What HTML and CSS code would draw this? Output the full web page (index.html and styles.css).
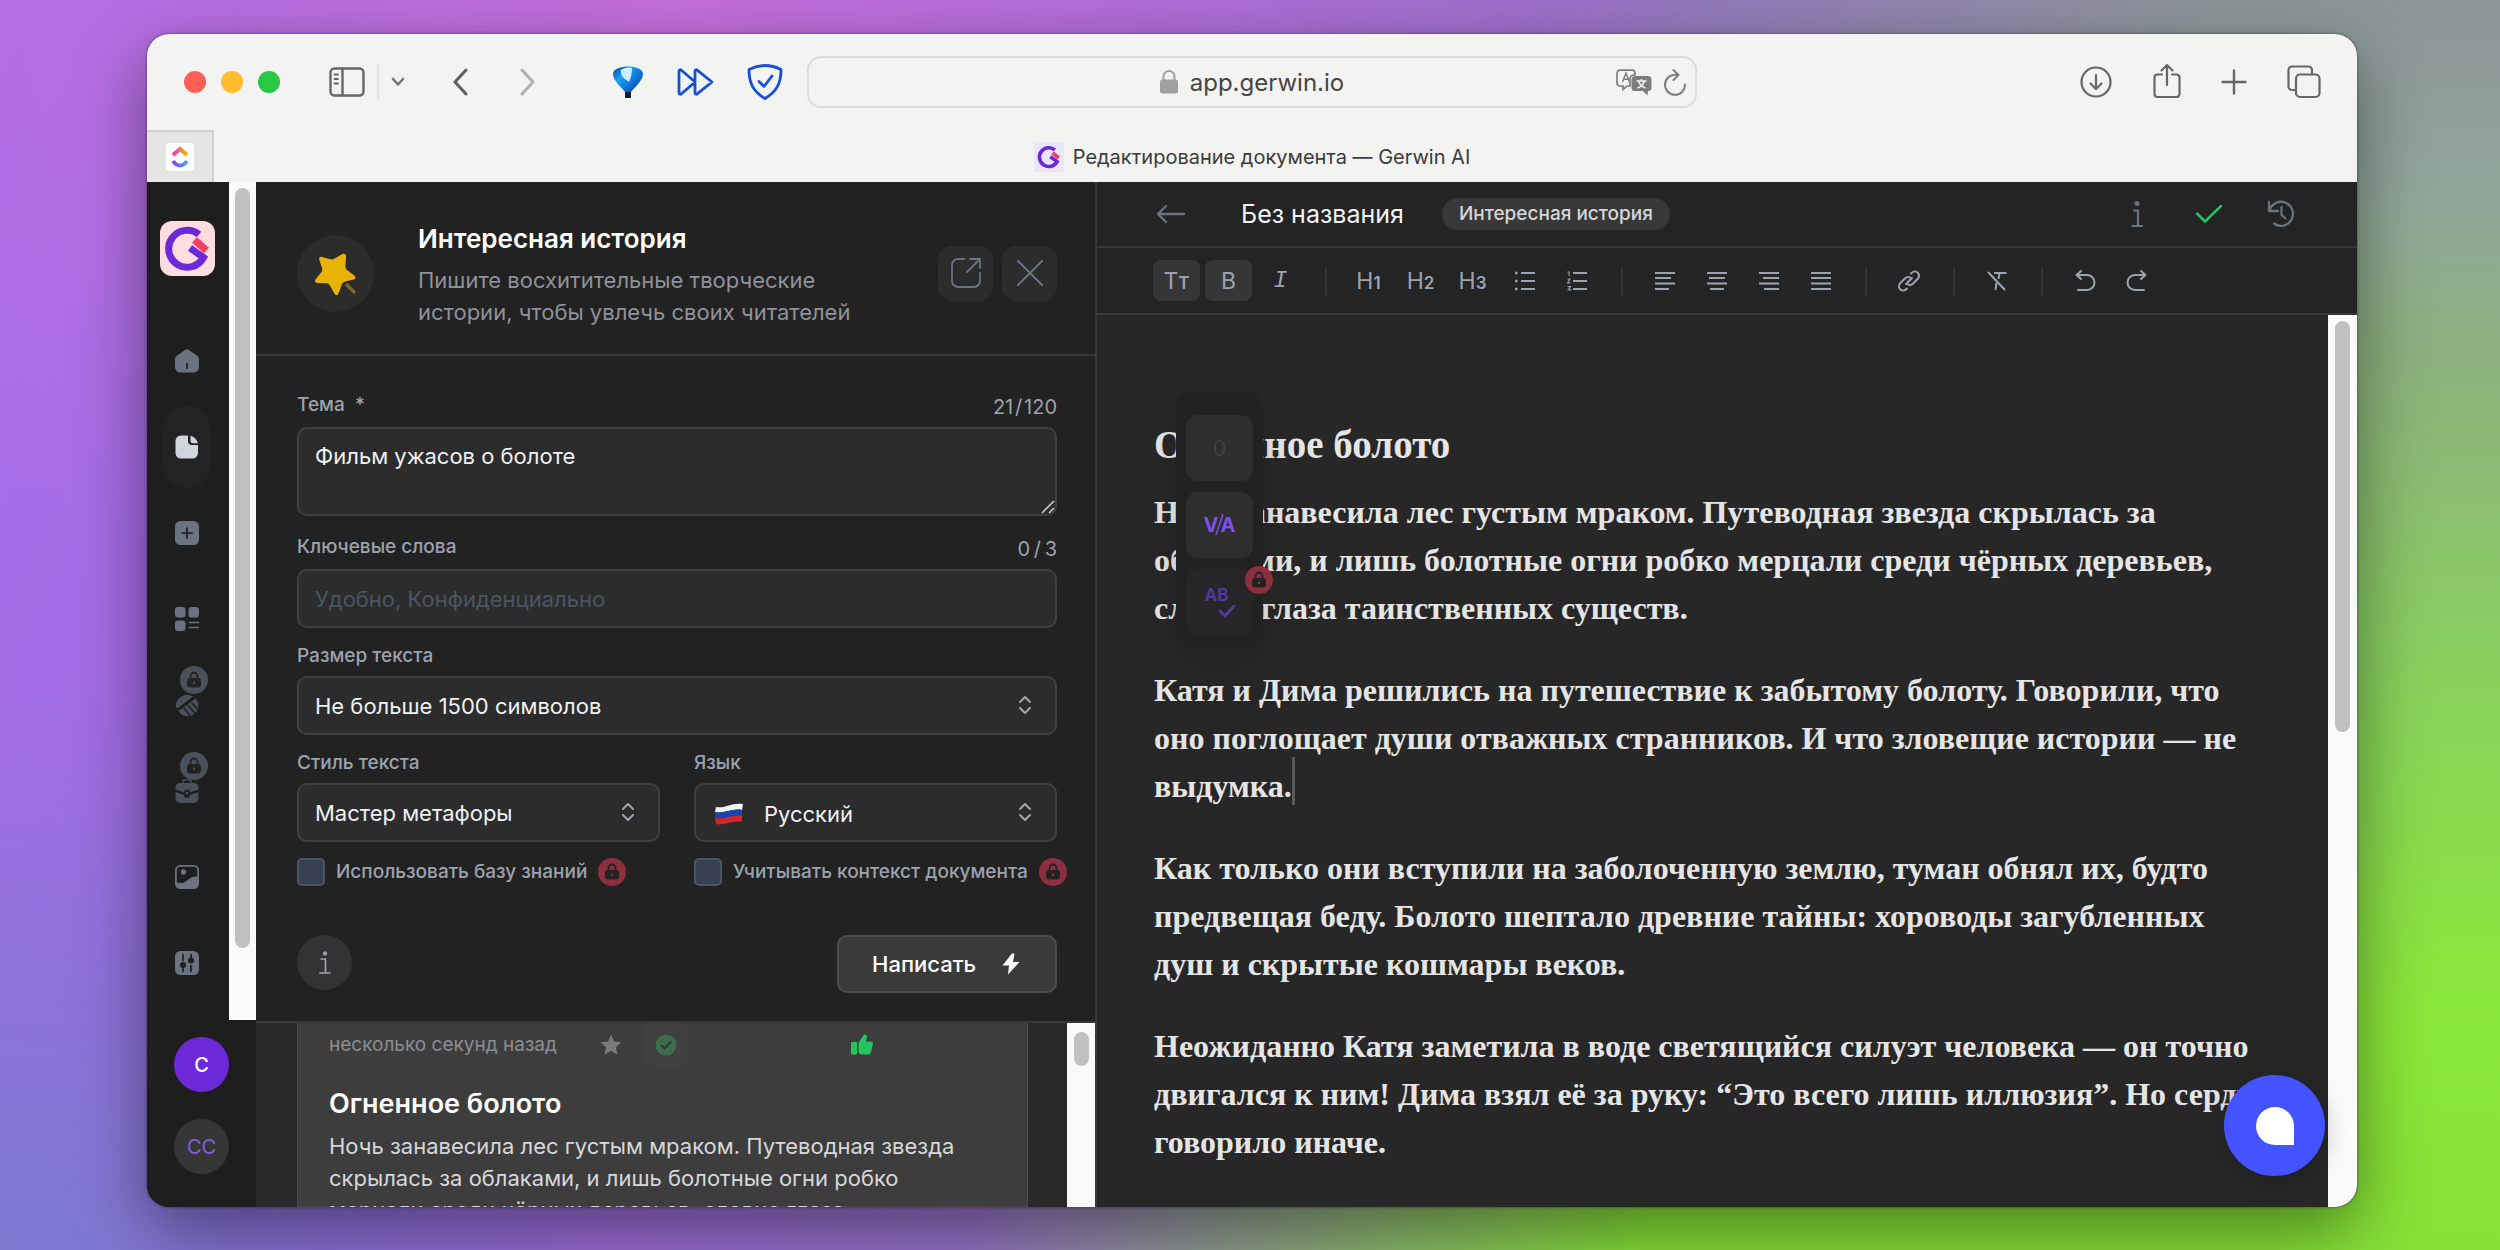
FILE: index.html
```html
<!DOCTYPE html>
<html lang="ru">
<head>
<meta charset="utf-8">
<meta name="viewport" content="width=device-width, initial-scale=1">
<title>Редактирование документа — Gerwin AI</title>
<link rel="stylesheet" href="styles.css">
</head>
<body>
<svg class="defs" aria-hidden="true">
  <defs>
    <linearGradient id="balloon" x1="0" x2="1" y1="0" y2="1"><stop offset="0" stop-color="#0a3d8f"/><stop offset=".3" stop-color="#1aa0f0"/><stop offset=".6" stop-color="#0b6fd0"/><stop offset="1" stop-color="#06204a"/></linearGradient>
    <linearGradient id="cu-top" x1="0" x2="1"><stop offset="0" stop-color="#f02fc2"/><stop offset="1" stop-color="#ffb400"/></linearGradient>
    <linearGradient id="cu-bottom" x1="0" x2="1"><stop offset="0" stop-color="#8a3cf5"/><stop offset="1" stop-color="#49a8ff"/></linearGradient>
    <symbol id="gerwin" viewBox="0 0 55 55">
      <path d="M39 13.500A18.500 18.500 0 1 0 43.500 36.500L30 27" fill="none" stroke="#6d28d9" stroke-width="7"/>
      <path d="M34.500 19l12 10.500" stroke="#f43f5e" stroke-width="7.500" fill="none"/>
    </symbol>
    <symbol id="lock" viewBox="0 0 28 28">
      <circle cx="14" cy="14" r="14" fill="currentColor"/>
      <path d="M10.500 12.500v-2.500a3.500 3.500 0 0 1 7 0v2.500" fill="none" stroke="#222" stroke-width="1.800"/>
      <rect x="7" y="12" width="14" height="9.500" rx="3" fill="#222"/>
      <circle cx="14" cy="16.800" r="1.300" fill="currentColor"/>
    </symbol>
    <symbol id="updown" viewBox="0 0 14 20"><path d="M2 7l5-5 5 5M2 13l5 5 5-5" fill="none" stroke="#a3a6ad" stroke-width="2" stroke-linecap="round" stroke-linejoin="round"/></symbol>
  </defs>
</svg>

<div class="window">
  <header class="chrome">
    <div class="chrome-left">
      <div class="lights"><i class="light red"></i><i class="light yellow"></i><i class="light green"></i></div>
      <button class="plain sidebar-toggle" aria-label="Боковая панель">
        <svg width="36" height="30" viewBox="0 0 36 30" fill="none" stroke="#666664" stroke-width="2.400" stroke-linecap="round"><rect x="1.500" y="1.500" width="33" height="27" rx="4"/><path d="M13.500 2v26"/><path d="M5.500 7.500h3.500M5.500 12h3.500M5.500 16.500h3.500" stroke-width="1.800"/></svg>
      </button>
      <button class="plain tab-menu" aria-label="Группы вкладок"><svg width="14" height="10" viewBox="0 0 14 10" fill="none" stroke="#747472" stroke-width="2.600" stroke-linecap="round" stroke-linejoin="round"><path d="M2 2l5 5.500L12 2"/></svg></button>
      <button class="plain nav-back" aria-label="Назад"><svg width="17" height="28" viewBox="0 0 17 28" fill="none" stroke="#5f5f5d" stroke-width="3" stroke-linecap="round" stroke-linejoin="round"><path d="M14 2L3 14l11 12"/></svg></button>
      <button class="plain nav-forward" aria-label="Вперёд"><svg width="17" height="28" viewBox="0 0 17 28" fill="none" stroke="#b0b0ae" stroke-width="3" stroke-linecap="round" stroke-linejoin="round"><path d="M3 2l11 12L3 26"/></svg></button>
      <div class="extensions">
        <button class="plain" aria-label="Воздушный шар"><svg width="32" height="33" viewBox="0 0 32 33"><path d="M1 8C1 3 8 .5 16 .5S31 3 31 8c0 6-8 13-12 18v6h-6v-6C9 21 1 14 1 8z" fill="url(#balloon)"/><path d="M9 4c4-3 9-3 11-2 0 5-1 10-3 14C12 13 8 9 9 4z" fill="#cfeeff"/><path d="M13 26h6v6h-6z" fill="#0a2038"/></svg></button>
        <button class="plain" aria-label="Ускорение"><svg width="37" height="28" viewBox="0 0 37 28" fill="none" stroke="#1550d6" stroke-width="2.800" stroke-linejoin="round"><path d="M2 3v22c0 1.500 1.500 1.500 2.500.7L18 14 4.500 2.300C3.500 1.500 2 1.500 2 3zM18 3v22c0 1.500 1.500 1.500 2.500.7L35 14 20.500 2.300C19.500 1.500 18 1.500 18 3z"/></svg></button>
        <button class="plain" aria-label="Защита"><svg width="36" height="36" viewBox="0 0 36 36" fill="none" stroke="#1550d6" stroke-width="2.800" stroke-linejoin="round" stroke-linecap="round"><path d="M18 1.500c5 0 11 1.500 16 4C34 19 30 27.500 18 34.500 6 27.500 2 19 2 5.500c5-2.500 11-4 16-4z"/><path d="M12 17.500l5 5 8-10.500"/></svg></button>
      </div>
    </div>
    <div class="url-bar">
      <div class="url-center">
        <svg width="18" height="24" viewBox="0 0 18 24"><rect x="0" y="9.500" width="18" height="14" rx="2.500" fill="#a0a09e"/><path d="M3.500 11V6.500a5.500 5.500 0 0 1 11 0V11" fill="none" stroke="#a0a09e" stroke-width="2"/></svg>
        <span>app.gerwin.io</span>
      </div>
      <div class="url-actions">
        <button class="plain" aria-label="Перевести"><svg width="36" height="27" viewBox="0 0 36 27"><path d="M4 1.200h12a3 3 0 0 1 3 3V6h-1a4 4 0 0 0-4 4v7h-3l-4 3.500V17H4a3 3 0 0 1-3-3V4.200a3 3 0 0 1 3-3z" fill="none" stroke="#7d7d7b" stroke-width="1.700"/><path d="M6.500 13L10 4l3.500 9M7.800 10.200h4.400" fill="none" stroke="#7d7d7b" stroke-width="1.500"/><path d="M19 7h13a3.500 3.500 0 0 1 3.500 3.500v8a3.500 3.500 0 0 1-3.500 3.500l-.5 4.500L27 22h-8a3.500 3.500 0 0 1-3.500-3.500v-8A3.500 3.500 0 0 1 19 7z" fill="#7d7d7b"/><path d="M20.500 12h10M25.500 10v2M28.500 12c-1 3-4 6-7 7M22.500 12c1 3 4 6 7 7" fill="none" stroke="#f3f3f1" stroke-width="1.500"/></svg></button>
        <button class="plain" aria-label="Обновить"><svg width="22" height="28" viewBox="0 0 22 28" fill="none" stroke="#7d7d7b" stroke-width="2" stroke-linecap="round" stroke-linejoin="round"><path d="M13 7A10 10 0 1 0 21 16.500M9.500 2l5 5-5 5"/></svg></button>
      </div>
    </div>
    <div class="chrome-right">
      <button class="plain" aria-label="Загрузки"><svg width="34" height="34" viewBox="0 0 34 34" fill="none" stroke="#666664" stroke-width="2.200" stroke-linecap="round" stroke-linejoin="round"><circle cx="17" cy="17" r="14.500"/><path d="M17 10v14M11.500 18.500L17 24l5.500-5.500"/></svg></button>
      <button class="plain" aria-label="Поделиться"><svg width="28" height="38" viewBox="0 0 28 38" fill="none" stroke="#666664" stroke-width="2.200" stroke-linecap="round" stroke-linejoin="round"><path d="M9 11.500H4.500a3 3 0 0 0-3 3V31a3 3 0 0 0 3 3h19a3 3 0 0 0 3-3V14.500a3 3 0 0 0-3-3H19M14 22V2M8.500 7.500L14 2l5.500 5.500"/></svg></button>
      <button class="plain" aria-label="Новая вкладка"><svg width="26" height="26" viewBox="0 0 26 26" fill="none" stroke="#666664" stroke-width="2.400" stroke-linecap="round"><path d="M13 1.500v23M1.500 13h23"/></svg></button>
      <button class="plain" aria-label="Все вкладки"><svg width="34" height="34" viewBox="0 0 34 34" fill="none" stroke="#666664" stroke-width="2.200" stroke-linejoin="round"><rect x="9" y="9.500" width="23.500" height="22.500" rx="4"/><path d="M9 25H5a3.500 3.500 0 0 1-3.500-3.500V5A3.500 3.500 0 0 1 5 1.500h16.500A3.500 3.500 0 0 1 25 5v4.500"/></svg></button>
    </div>
  </header>

  <nav class="tabs">
    <button class="pinned-tab" aria-label="ClickUp"><svg width="28" height="28" viewBox="0 0 28 28"><rect width="28" height="28" rx="4" fill="#fff"/><path d="M7 12l7-6 7 6" fill="none" stroke="url(#cu-top)" stroke-width="4"/><path d="M7 18c4 6 10 6 14 0" fill="none" stroke="url(#cu-bottom)" stroke-width="4"/></svg></button>
    <div class="active-tab">
      <svg width="30" height="30" viewBox="0 0 30 30"><rect width="30" height="30" fill="#ece6fa"/><use href="#gerwin" x="1" y="1" width="28" height="28"/></svg>
      <span>Редактирование документа — Gerwin AI</span>
    </div>
  </nav>

  <div class="app">
    <aside class="rail">
      <div class="rail-scroll">
        <div class="rail-items">
          <a class="logo" href="#" aria-label="Gerwin"><svg width="55" height="55"><use href="#gerwin"/></svg></a>
          <a class="rail-link" href="#" aria-label="Главная"><svg width="24" height="24" viewBox="0 0 24 24"><path d="M10.500.8a2.600 2.600 0 0 1 3 0l8 5.400A4.500 4.500 0 0 1 24 10v8a5.500 5.500 0 0 1-5.500 5.500h-13A5.500 5.500 0 0 1 0 18v-8a4.500 4.500 0 0 1 2.500-3.800z" fill="#6b7280"/><path d="M12 15v4" stroke="#1e1e1e" stroke-width="1.800" stroke-linecap="round"/></svg></a>
          <a class="rail-link active" href="#" aria-label="Документы"><svg width="24" height="24" viewBox="0 0 24 24"><path d="M6 .5h7v5.500a4 4 0 0 0 4 4h6V18a5.500 5.500 0 0 1-5.500 5.500H6A5.500 5.500 0 0 1 .5 18V6A5.500 5.500 0 0 1 6 .5z" fill="#d1d5db"/><path d="M15.500.8c3.500 1 6.500 4 7.500 7.500h-5a2.500 2.500 0 0 1-2.500-2.500z" fill="#d1d5db"/></svg></a>
          <a class="rail-link" href="#" aria-label="Создать"><svg width="24" height="24" viewBox="0 0 24 24"><rect width="24" height="24" rx="5.500" fill="#6b7280"/><path d="M12 7v10M7 12h10" stroke="#1e1e1e" stroke-width="1.700" stroke-linecap="round"/></svg></a>
          <a class="rail-link" href="#" aria-label="Шаблоны"><svg width="24" height="24" viewBox="0 0 24 24" fill="#6b7280"><rect width="10.500" height="10.500" rx="3"/><rect x="13.500" width="10.500" height="10.500" rx="3"/><rect y="13.500" width="10.500" height="10.500" rx="3"/><path d="M14.500 15.500h9M14.500 20.500h9" stroke="#6b7280" stroke-width="1.600" stroke-linecap="round"/></svg></a>
          <a class="rail-link" href="#" aria-label="Партнёры"><svg width="24" height="24" viewBox="0 0 24 24"><path d="M.8 14.500A11.500 11.500 0 0 1 18 3.500L3.500 14.500a2 2 0 0 1-2.700 0zM20.500 5.500c3.500 4 3.800 9 1 13-3.500 5-10 6-15 3l-4-4.500c2 .3 3-.4 4.500-1.500z" fill="#4b505b"/><path d="M9 15l6 7.500M13 12l7 8.500M16.500 9.500l6 7" stroke="#1e1e1e" stroke-width="1.500"/></svg><svg class="rail-lock" width="28" height="28"><use href="#lock"/></svg></a>
          <a class="rail-link" href="#" aria-label="Портфель"><svg width="24" height="24" viewBox="0 0 24 24"><path d="M8 3.500V2.500A1.500 1.500 0 0 1 9.500 1h5A1.500 1.500 0 0 1 16 2.500v1" fill="none" stroke="#4b505b" stroke-width="1.700"/><path d="M5 4h14a4.500 4.500 0 0 1 4.500 4.500v2L15 13.500a3 3 0 0 0-6 0L.5 10.500v-2A4.500 4.500 0 0 1 5 4zM.5 13l8.500 3a3 3 0 0 0 6 0l8.500-3v6a5 5 0 0 1-5 5h-13a5 5 0 0 1-5-5z" fill="#4b505b"/><circle cx="12" cy="14" r="1.500" fill="#4b505b"/></svg><svg class="rail-lock" width="28" height="28"><use href="#lock"/></svg></a>
          <a class="rail-link" href="#" aria-label="Изображения"><svg width="24" height="24" viewBox="0 0 24 24"><rect x=".9" y=".9" width="22.200" height="22.200" rx="4.500" fill="none" stroke="#6b7280" stroke-width="1.800"/><circle cx="8.500" cy="7" r="2.700" fill="#6b7280"/><path d="M1 18c4-1 6 1 9-1s8-7 13-5v7a4 4 0 0 1-4 4H5a4 4 0 0 1-4-4z" fill="#6b7280"/></svg></a>
          <a class="rail-link" href="#" aria-label="Настройки"><svg width="24" height="24" viewBox="0 0 24 24"><rect width="24" height="24" rx="5.500" fill="#6b7280"/><path d="M8 3.500v6M8 16v4.500M16 3.500V8M16 14.500v6" stroke="#1e1e1e" stroke-width="1.700" stroke-linecap="round"/><circle cx="8" cy="14" r="3" fill="#1e1e1e"/><circle cx="16" cy="9.500" r="3" fill="#1e1e1e"/></svg></a>
        </div>
        <div class="scrollbar"><i class="thumb thumb-rail"></i></div>
      </div>
      <div class="rail-users">
        <button class="avatar avatar-main">C</button>
        <button class="avatar">CC</button>
      </div>
    </aside>

    <section class="panel">
      <header class="tool-head">
        <div class="tool-icon"><svg width="44" height="44" viewBox="0 0 44 44"><path d="M33 34l7 7" stroke="#7d6532" stroke-width="3.500" stroke-linecap="round"/><path d="M28.500 3c1.800-.8 3.600.2 3.500 2.300l-.6 9.700a5 5 0 0 0 1.600 4l7.300 5.500c1.800 1.300 1.300 3.500-.8 4l-8.500 2a5 5 0 0 0-3.200 3l-3.300 9c-.8 2.100-3 2.200-4 .3l-4.600-8.300a4 4 0 0 0-3.400-2.200L3.500 32c-2.300 0-3.200-2-1.800-3.700l5.600-7a5 5 0 0 0 .8-4L5.300 9C4.700 6.800 6 5.300 8.200 5.900l8.300 2.300a5 5 0 0 0 4-.7z" fill="#eab308"/></svg></div>
        <div class="tool-text">
          <h1>Интересная история</h1>
          <p>Пишите восхитительные творческие истории, чтобы увлечь своих читателей</p>
        </div>
        <div class="tool-actions">
          <button aria-label="Открыть"><svg width="30" height="30" viewBox="0 0 30 30" fill="none" stroke="#6b7280" stroke-width="1.800" stroke-linecap="round" stroke-linejoin="round"><path d="M13 1H7a6 6 0 0 0-6 6v16a6 6 0 0 0 6 6h16a6 6 0 0 0 6-6v-8M19 1h10v9M29 1L16 14"/></svg></button>
          <button aria-label="Закрыть"><svg width="26" height="26" viewBox="0 0 26 26" stroke="#6b7280" stroke-width="2" stroke-linecap="round"><path d="M1 1l24 24M25 1L1 25"/></svg></button>
        </div>
      </header>

      <form class="form">
        <div class="field field-area">
          <div class="label-row"><label for="topic">Тема&nbsp; *</label><span class="counter">21&#8202;/&#8202;120</span></div>
          <div class="control"><textarea id="topic">Фильм ужасов о болоте</textarea>
          <svg class="grip" width="14" height="14" viewBox="0 0 14 14" stroke="#d0d0d0" stroke-width="1.500"><path d="M1 13L13 1M8 13l5-5"/></svg></div>
        </div>
        <div class="field">
          <div class="label-row"><label for="keys">Ключевые слова</label><span class="counter">0&#8201;/&#8201;3</span></div>
          <input id="keys" type="text" placeholder="Удобно, Конфиденциально">
        </div>
        <div class="field">
          <label for="size">Размер текста</label>
          <div class="control"><select id="size"><option>Не больше 1500 символов</option></select><svg class="arrows" width="14" height="20"><use href="#updown"/></svg></div>
        </div>
        <div class="pair">
          <div class="field">
            <label for="style">Стиль текста</label>
            <div class="control"><select id="style"><option>Мастер метафоры</option></select><svg class="arrows" width="14" height="20"><use href="#updown"/></svg></div>
          </div>
          <div class="field">
            <label for="lang">Язык</label>
            <div class="control"><svg class="flag" width="30" height="22" viewBox="0 0 30 22"><path d="M2 4C10 6 18-1 29 1l-1 6C18 5 10 11 1 9z" fill="#f2f2f2"/><path d="M1 9c9 2 17-4 27-2v6c-10-2-18 4-27 2z" fill="#1544b5"/><path d="M1 15c9 2 17-4 27-2v6c-10-2-18 4-26 2z" fill="#d5242b"/></svg><select id="lang" class="with-flag"><option>Русский</option></select><svg class="arrows" width="14" height="20"><use href="#updown"/></svg></div>
          </div>
        </div>
        <div class="pair">
          <div class="check"><input type="checkbox" id="kb"><label for="kb">Использовать базу знаний</label><svg class="lock" width="28" height="28"><use href="#lock"/></svg></div>
          <div class="check"><input type="checkbox" id="ctx"><label for="ctx">Учитывать контекст документа</label><svg class="lock" width="28" height="28"><use href="#lock"/></svg></div>
        </div>
        <div class="form-foot">
          <button type="button" class="info" aria-label="Справка"><svg width="14" height="24" viewBox="0 0 14 24" fill="none" stroke="#9ca3af" stroke-width="1.700" stroke-linecap="round" stroke-linejoin="round"><circle cx="7" cy="2.500" r="1.300" fill="#9ca3af"/><path d="M3 8h4.500v14M2 22h10"/></svg></button>
          <button type="button" class="submit">Написать<svg width="18" height="22" viewBox="0 0 18 22"><path d="M10 .5L.5 12.500H7L6 21.500 17.500 9H11l1.500-8.500z" fill="#fff"/></svg></button>
        </div>
      </form>

      <div class="results">
        <article class="card">
          <div class="card-meta">
            <time>несколько секунд назад</time>
            <button class="plain star" aria-label="В избранное"><svg width="22" height="22" viewBox="0 0 22 22"><path d="M11 .5l3 7 7.500.7-5.700 5 1.700 7.500L11 16.800l-6.500 3.900 1.700-7.500-5.700-5L8 7.500z" fill="#7b7b7d"/></svg></button>
            <button class="done" aria-label="Использовано"><svg width="22" height="22" viewBox="0 0 22 22"><circle cx="11" cy="11" r="10.500" fill="#3f6a4f"/><path d="M6.500 11.500l3 3 6-6.500" fill="none" stroke="#2e3a32" stroke-width="2" stroke-linecap="round"/></svg></button>
            <button class="plain like" aria-label="Нравится"><svg width="22" height="21" viewBox="0 0 22 21" fill="#22c55e"><rect y="8" width="6" height="12.500" rx="1"/><path d="M7.500 9L12.500 1c2-1.200 4 .3 3.500 2.500L15 7.500h4.500c1.800 0 2.700 1.300 2.300 3l-1.800 7.500c-.4 1.700-1.500 2.500-3 2.500h-6c-1.500 0-3.500-1-3.500-2.500z"/></svg></button>
          </div>
          <h2>Огненное болото</h2>
          <p>Ночь занавесила лес густым мраком. Путеводная звезда скрылась за облаками, и лишь болотные огни робко мерцали среди чёрных деревьев, словно глаза таинственных существ.</p>
        </article>
        <div class="scrollbar"><i class="thumb thumb-results"></i></div>
      </div>
    </section>

    <main class="editor">
      <header class="doc-head">
        <button class="plain" aria-label="Назад к списку"><svg width="30" height="20" viewBox="0 0 30 20" fill="none" stroke="#6b7280" stroke-width="2.300" stroke-linecap="round" stroke-linejoin="round"><path d="M28 10H2M10 2l-8 8 8 8"/></svg></button>
        <span class="doc-title">Без названия</span>
        <span class="pill">Интересная история</span>
        <div class="doc-actions">
          <button class="plain" aria-label="Информация"><svg width="28" height="28" viewBox="0 0 28 28" fill="none" stroke="#6b7280" stroke-width="2.200" stroke-linecap="round" stroke-linejoin="round"><circle cx="14" cy="3.500" r="2.500" fill="#6b7280" stroke="none"/><path d="M11 10.500h4V26M9.500 26h9.500"/></svg></button>
          <button class="plain" aria-label="Сохранено"><svg width="28" height="22" viewBox="0 0 28 22" fill="none" stroke="#22c55e" stroke-width="2.500" stroke-linecap="round" stroke-linejoin="round"><path d="M2 10.500l8 8L26 3"/></svg></button>
          <button class="plain" aria-label="История"><svg width="28" height="28" viewBox="0 0 28 28" fill="none" stroke="#6b7280" stroke-width="2.300" stroke-linecap="round" stroke-linejoin="round"><path d="M2 2v9h9M2.500 10.500A12 12 0 1 1 7 23.500M14.500 7v8l4 3.500"/></svg></button>
        </div>
      </header>

      <div class="toolbar" role="toolbar" aria-label="Форматирование">
        <button class="on" aria-label="Текст"><b class="big">T</b><b class="small">T</b></button>
        <button class="on" aria-label="Жирный"><b class="big">B</b></button>
        <button aria-label="Курсив"><b class="big ital">I</b></button>
        <i class="sep"></i>
        <button aria-label="Заголовок 1"><b class="big">H</b><b class="small">1</b></button>
        <button aria-label="Заголовок 2"><b class="big">H</b><b class="small">2</b></button>
        <button aria-label="Заголовок 3"><b class="big">H</b><b class="small">3</b></button>
        <button aria-label="Список"><svg width="20" height="20" viewBox="0 0 20 20" stroke="#9ca3af" stroke-width="2"><path d="M6 2h14M6 10h14M6 18h14"/><path d="M0 2h2.500M0 10h2.500M0 18h2.500" stroke-width="2.500"/></svg></button>
        <button aria-label="Нумерованный список"><svg width="20" height="20" viewBox="0 0 20 20" stroke="#9ca3af" stroke-width="2" fill="none"><path d="M6 2h14M6 10h14M6 18h14"/><path d="M.5 1H2v4M.5 8h2.500l-2.500 4H3.500M.5 15.500h3L2 17.500l1.500 1.500H.5" stroke-width="1.100"/></svg></button>
        <i class="sep"></i>
        <button aria-label="По левому краю"><svg width="20" height="20" viewBox="0 0 20 20" stroke="#9ca3af" stroke-width="2"><path d="M0 2h20M0 7h16M0 12.500h20M0 18h14"/></svg></button>
        <button aria-label="По центру"><svg width="20" height="20" viewBox="0 0 20 20" stroke="#9ca3af" stroke-width="2"><path d="M0 2h20M2 7h16M0 12.500h20M3 18h14"/></svg></button>
        <button aria-label="По правому краю"><svg width="20" height="20" viewBox="0 0 20 20" stroke="#9ca3af" stroke-width="2"><path d="M0 2h20M4 7h16M0 12.500h20M5 18h15"/></svg></button>
        <button aria-label="По ширине"><svg width="20" height="20" viewBox="0 0 20 20" stroke="#9ca3af" stroke-width="2"><path d="M0 2h20M0 7h20M0 12.500h20M0 18h20"/></svg></button>
        <i class="sep"></i>
        <button aria-label="Ссылка"><svg width="24" height="24" viewBox="0 0 24 24" fill="none" stroke="#9ca3af" stroke-width="2" stroke-linecap="round"><path d="M9 18.500l-.8.8a4.200 4.200 0 0 1-6-6l5-5a4.200 4.200 0 0 1 5-.7" transform="translate(1 1)"/><path d="M15 5.500l.8-.8a4.200 4.200 0 0 1 6 6l-5 5a4.200 4.200 0 0 1-5 .7" transform="translate(-1 -1)"/><path d="M9 15l6-6"/></svg></button>
        <i class="sep"></i>
        <button aria-label="Очистить формат"><svg width="20" height="20" viewBox="0 0 20 20" fill="none" stroke="#9ca3af" stroke-width="2"><path d="M7 2h12.500M1 1l17 18M12.500 2l-1 6M9.500 12l-1 7"/></svg></button>
        <i class="sep"></i>
        <button aria-label="Отменить"><svg width="22" height="22" viewBox="0 0 22 22" fill="none" stroke="#9ca3af" stroke-width="2" stroke-linecap="round" stroke-linejoin="round"><path d="M7 1L2.500 5 7 9M3 5h10a7.500 7.500 0 0 1 0 15H4"/></svg></button>
        <button aria-label="Повторить"><svg width="22" height="22" viewBox="0 0 22 22" fill="none" stroke="#9ca3af" stroke-width="2" stroke-linecap="round" stroke-linejoin="round"><path d="M15 1l4.500 4L15 9M19 5H9a7.500 7.500 0 0 0 0 15h9"/></svg></button>
      </div>

      <div class="doc">
        <article class="doc-text">
          <h2>Огненное болото</h2>
          <p>Ночь занавесила лес густым мраком. Путеводная звезда скрылась за<br>облаками, и лишь болотные огни робко мерцали среди чёрных деревьев,<br>словно глаза таинственных существ.</p>
          <p>Катя и Дима решились на путешествие к забытому болоту. Говорили, что<br>оно поглощает души отважных странников. И что зловещие истории — не<br>выдумка.<i class="caret"></i></p>
          <p>Как только они вступили на заболоченную землю, туман обнял их, будто<br>предвещая беду. Болото шептало древние тайны: хороводы загубленных<br>душ и скрытые кошмары веков.</p>
          <p>Неожиданно Катя заметила в воде светящийся силуэт человека — он точно<br>двигался к ним! Дима взял её за руку: “Это всего лишь иллюзия”. Но сердце<br>говорило иначе.</p>
        </article>
        <div class="scrollbar"><i class="thumb thumb-doc"></i></div>
        <div class="float-menu">
          <button class="count">0</button>
          <button aria-label="Переписать"><span class="va">V<svg width="10" height="24" viewBox="0 0 10 24"><path d="M8 1L1 22" stroke="#7c4ff0" stroke-width="1.500"/></svg>A</span></button>
          <button class="dim" aria-label="Проверка текста"><span class="ab">AB</span><svg class="ab-check" width="18" height="14" viewBox="0 0 18 14"><path d="M2 7l5 5L16 2" fill="none" stroke="#52389a" stroke-width="3" stroke-linecap="round" stroke-linejoin="round"/></svg></button>
          <svg class="lock menu-lock" width="28" height="28"><use href="#lock"/></svg>
        </div>
        <button class="chat" aria-label="Чат"><svg width="38" height="38" viewBox="0 0 38 38"><path d="M19 0a19 19 0 0 1 19 19v19H19a19 19 0 0 1 0-38z" fill="#fff"/></svg></button>
      </div>
    </main>
  </div>
</div>
</body>
</html>
```
FILE: styles.css
```css
* { box-sizing: border-box; }

body {
  margin: 0;
  min-height: 100vh;
  padding: 34px 143px 43px 147px;
  font-family: Inter, "Noto Sans", sans-serif;
  color: #e5e7eb;
  background:
    radial-gradient(ellipse 42% 50% at 27% 0%, #c46fdc 0%, rgba(196, 111, 220, 0) 100%),
    radial-gradient(ellipse 24% 55% at 0% 108%, #767cce 0%, rgba(118, 124, 206, 0) 100%),
    linear-gradient(115deg, #aa6eea 0%, #9d68e0 30%, #9672c8 50%, rgba(168, 143, 184, 0) 72%),
    linear-gradient(180deg, #8d9599 0%, #90a79a 16%, #8db07f 28%, #88d558 58%, #8ae838 82%, #86e236 100%);
}

.defs { position: absolute; width: 0; height: 0; }
svg { display: block; flex: none; }
button { font: inherit; color: inherit; border: 0; padding: 0; cursor: pointer; }
h1, h2, p { margin: 0; }

.plain { background: none; display: flex; align-items: center; justify-content: center; }

.window {
  height: calc(100vh - 77px);
  min-height: 900px;
  display: grid;
  grid-template-rows: 96px 52px minmax(0, 1fr);
  border-radius: 22px;
  overflow: hidden;
  background: #222;
  box-shadow: 0 24px 70px rgba(0, 0, 0, .45), 0 0 3px rgba(0, 0, 0, .5);
}

/* Browser toolbar */
.chrome {
  display: grid;
  grid-template-columns: 660px minmax(0, 1fr) 660px;
  align-items: center;
  background: #f3f3f1;
}
.chrome-left { display: flex; align-items: center; padding-left: 37px; }
.lights { display: flex; gap: 15px; }
.light { width: 22px; height: 22px; border-radius: 50%; }
.red { background: #ff5f57; }
.yellow { background: #febc2e; }
.green { background: #28c840; }
.sidebar-toggle { margin-left: 49px; }
.tab-menu { margin-left: 12px; padding-left: 12px; height: 34px; border-left: 2px solid #e2e2e0; }
.nav-back { margin-left: 47px; }
.nav-forward { margin-left: 50px; }
.extensions { display: flex; align-items: center; gap: 33px; margin-left: 76px; }

.url-bar {
  position: relative;
  display: flex;
  align-items: center;
  justify-content: center;
  height: 52px;
  border: 2px solid #dcdcda;
  border-radius: 14px;
}
.url-center { display: flex; align-items: center; gap: 12px; font-size: 24px; color: #454543; }
.url-actions { position: absolute; right: 9px; display: flex; align-items: center; gap: 12px; }
.chrome-right { display: flex; align-items: center; justify-content: flex-end; gap: 40px; padding-right: 36px; }

.tabs { display: grid; grid-template-columns: 67px 1fr 67px; background: #f3f3f1; }
.pinned-tab {
  display: flex;
  align-items: center;
  justify-content: center;
  background: #e5e5e3;
  border-top: 2px solid #cfcfcd;
  border-right: 2px solid #cfcfcd;
}
.active-tab {
  display: flex;
  align-items: center;
  justify-content: center;
  gap: 9px;
  padding-top: 2px;
  font-size: 20px;
  color: #3c3c3a;
}

/* App shell */
.app {
  display: grid;
  grid-template-columns: 109px minmax(0, 841fr) minmax(0, 1260fr);
  min-height: 0;
}

.scrollbar { display: flex; justify-content: center; background: #fafafa; padding: 6px 0; flex: none; }
.thumb { width: 15px; border-radius: 8px; background: #c1c1c1; }
.thumb-rail { height: 92%; }
.thumb-results { height: 34px; margin-top: 3px; }
.thumb-doc { height: 411px; }

/* Left rail */
.rail { display: flex; flex-direction: column; background: #1e1e1e; min-height: 0; }
.rail-scroll { flex: 1; display: flex; min-height: 0; }
.rail-scroll .scrollbar { width: 27px; }
.rail-items { flex: 1; display: flex; flex-direction: column; align-items: center; padding: 39px 2px 0 0; min-height: 0; overflow: hidden; }
.logo { background: #ffdce0; border-radius: 12px; margin-bottom: 44px; }
.rail-link { position: relative; width: 48px; height: 82px; margin-bottom: 4px; display: flex; align-items: center; justify-content: center; border-radius: 24px; }
.rail-link.active { background: #232323; }
.rail-lock { position: absolute; top: 2px; left: 17px; color: #4b505b; }
.rail-users { display: flex; flex-direction: column; align-items: flex-end; gap: 27px; padding: 17px 27px 33px 0; }
.avatar { width: 55px; height: 55px; border-radius: 50%; background: #363636; color: #8360dc; font-size: 20px; }
.avatar-main { background: #6d28d9; color: #fff; font-weight: 500; }

/* Tool panel */
.panel { display: flex; flex-direction: column; min-height: 0; background: #222; border-right: 2px solid #383838; }
.tool-head { display: flex; align-items: center; padding: 10px 38px 0 41px; height: 174px; border-bottom: 2px solid #383838; }
.tool-icon { width: 77px; height: 77px; border-radius: 50%; background: #2c2c2c; display: flex; align-items: center; justify-content: center; }
.tool-text { flex: 1; margin-left: 44px; padding-top: 3px; }
.tool-text h1 { font-size: 26px; line-height: 36px; font-weight: 600; color: #fff; }
.tool-text p { font-size: 22px; line-height: 32px; color: #8f929b; max-width: 460px; margin-top: 7px; }
.tool-actions { display: flex; gap: 9px; }
.tool-actions button { width: 55px; height: 55px; border-radius: 14px; background: #2c2c2c; display: flex; align-items: center; justify-content: center; }

.form { display: flex; flex-direction: column; gap: 16px; padding: 37px 38px 28px 41px; border-bottom: 2px solid #383838; }
.field { display: flex; flex-direction: column; gap: 8px; min-width: 0; }
.field-area { margin-bottom: 3px; }
.field label { font-size: 19px; line-height: 24px; font-weight: 500; color: #9ca3af; }
.label-row { display: flex; justify-content: space-between; align-items: flex-start; }
.counter { padding-top: 2px; font-size: 20px; line-height: 24px; color: #9ca3af; }
.control { position: relative; display: flex; }
.form textarea, .form select, .form input[type="text"] {
  width: 100%;
  height: 59px;
  margin: 0;
  padding: 0 16px;
  border: 2px solid #404040;
  border-radius: 10px;
  background: #2c2c2c;
  color: #f0f1f3;
  font: 22px/32px Inter, "Noto Sans", sans-serif;
  appearance: none;
  outline: 0;
}
.form textarea { height: 89px; padding: 11px 16px; resize: none; overflow: hidden; }
.form input::placeholder { color: #4b5563; opacity: 1; }
.form select.with-flag { padding: 3px 16px 0 68px; }
.arrows { position: absolute; right: 25px; top: 19px; pointer-events: none; }
.grip { position: absolute; right: 2px; bottom: 2px; pointer-events: none; }
.flag { position: absolute; left: 20px; top: 20px; pointer-events: none; }
.pair { display: grid; grid-template-columns: minmax(0, 1fr) minmax(0, 1fr); gap: 34px; }
.check { display: flex; align-items: center; height: 28px; white-space: nowrap; }
.check input { appearance: none; width: 28px; height: 28px; margin: 0 11px 0 0; flex: none; border: 2px solid #4b5563; border-radius: 5px; background: #374151; }
.check label { font-size: 19px; line-height: 24px; font-weight: 500; color: #9ca3af; }
.lock { color: #8c3040; }
.check .lock { margin-left: 11px; }
.form-foot { display: flex; justify-content: space-between; margin-top: 33px; }
.info { width: 55px; height: 55px; border-radius: 50%; background: #333; display: flex; align-items: center; justify-content: center; }
.submit { display: flex; align-items: center; gap: 26px; height: 58px; padding: 0 35px 0 33px; border: 2px solid #4c4c4c; border-radius: 10px; background: #3a3a3a; color: #fff; font-size: 22px; font-weight: 500; }

.results { flex: 1; min-height: 0; display: flex; overflow: hidden; background: #292929; }
.results .scrollbar { width: 28px; margin-left: 39px; }
.card { flex: 1; min-width: 0; margin-left: 41px; padding: 0 32px 0 31px; background: #3d3d3d; border: 1px solid #4c4c4c; border-top: 0; }
.card-meta { display: flex; align-items: center; height: 43px; }
.card-meta time { font-size: 19px; color: #8b8e94; }
.star { margin-left: 43px; }
.done { width: 43px; height: 43px; margin-left: 23px; border-radius: 8px; background: #404040; display: flex; align-items: center; justify-content: center; }
.like { margin-left: 163px; }
.card h2 { font-size: 27px; line-height: 36px; font-weight: 600; color: #fff; margin-top: 20px; }
.card p { font-size: 22px; line-height: 32px; color: #d6d8dc; margin-top: 8px; }

/* Editor */
.editor { display: flex; flex-direction: column; min-width: 0; min-height: 0; background: #242424; }
.doc-head { display: flex; align-items: center; height: 66px; padding: 0 62px 0 59px; border-bottom: 2px solid #383838; }
.doc-title { margin-left: 55px; font-size: 25px; color: #f3f4f6; }
.pill { margin-left: 38px; padding: 0 17px; font-size: 19px; line-height: 32px; font-weight: 500; border-radius: 16px; background: #383838; color: #d5d7db; }
.doc-actions { margin-left: auto; display: flex; align-items: center; gap: 44px; }
.toolbar { display: flex; align-items: center; gap: 5px; height: 67px; padding-left: 56px; border-bottom: 2px solid #383838; color: #9ca3af; }
.toolbar button { width: 47px; height: 41px; background: none; border-radius: 8px; display: flex; align-items: center; justify-content: center; }
.toolbar button.on { background: #363636; }
.toolbar b { font-weight: 400; line-height: 24px; }
.big { font-size: 23px; }
.small { font-size: 17px; padding-top: 5px; }
.toolbar .small { font-weight: 600; }
.ital { font-family: "Liberation Mono", monospace; font-style: italic; }
.sep { width: 2px; height: 28px; margin: 0 13px 0 16px; background: #353535; }

.doc { position: relative; flex: 1; min-height: 0; display: flex; overflow: hidden; background: #272727; }
.doc .scrollbar { width: 29px; }
.doc-text {
  flex: 1;
  min-width: 0;
  padding: 106px 0 0 57px;
  white-space: nowrap;
  font-family: "Liberation Serif", serif;
  font-weight: 700;
  font-size: 32px;
  line-height: 48px;
  color: #e5e5e5;
}
.doc-text h2 { font-size: 39px; line-height: 48px; margin-bottom: 19px; }
.doc-text p { margin-bottom: 34px; }
.caret { display: inline-block; width: 3px; height: 48px; margin-top: -20px; vertical-align: -8px; background: #5a5a5a; }

.float-menu {
  position: absolute;
  left: 79px;
  top: 77px;
  width: 87px;
  padding: 23px 10px 11px;
  display: flex;
  flex-direction: column;
  gap: 11px;
  border-radius: 16px;
  background: #222;
  box-shadow: 0 16px 40px rgba(0, 0, 0, .15);
}
.float-menu button { height: 66px; border-radius: 12px; background: #2e2e2e; display: flex; flex-direction: column; align-items: center; justify-content: center; }
.float-menu .count { font-size: 22px; color: #3f3f3f; }
.float-menu .dim { background: #262628; }
.va { display: flex; align-items: center; font-size: 20px; font-weight: 700; color: #7c4ff0; }
.va svg { margin: 0 -4px; }
.ab { font-size: 17px; line-height: 18px; font-weight: 700; color: #52389a; margin-right: 6px; }
.ab-check { margin-left: 14px; }
.menu-lock { position: absolute; right: -10px; top: 174px; }

.chat {
  position: absolute;
  right: 32px;
  bottom: 31px;
  width: 101px;
  height: 101px;
  border-radius: 50%;
  background: #4353ff;
  display: flex;
  align-items: center;
  justify-content: center;
  box-shadow: 0 4px 24px rgba(0, 0, 0, .25);
}
```
